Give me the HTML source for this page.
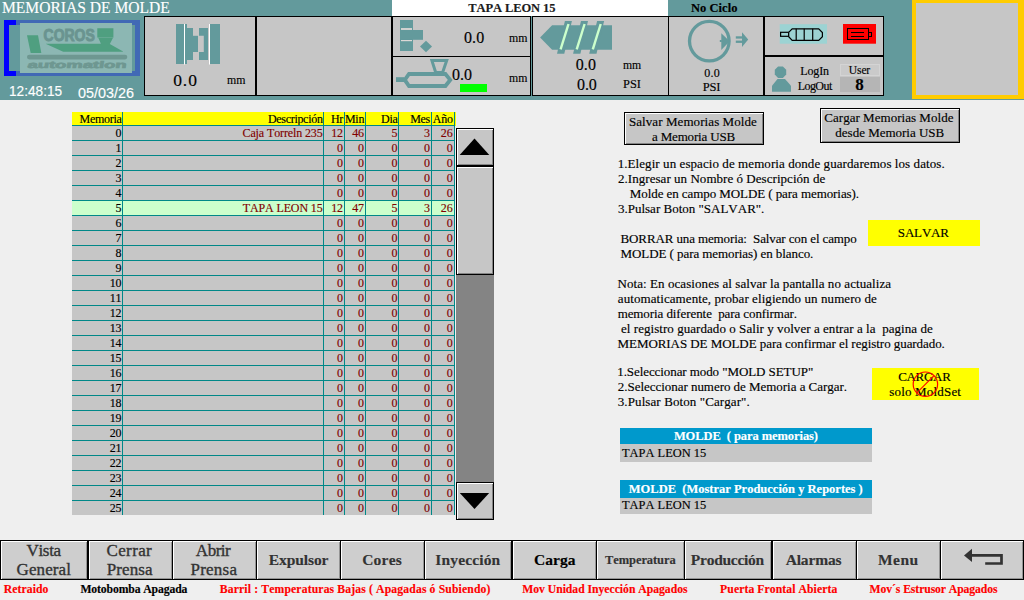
<!DOCTYPE html>
<html lang="es">
<head>
<meta charset="utf-8">
<title>MEMORIAS DE MOLDE</title>
<style>
*{box-sizing:border-box;margin:0;padding:0}
html,body{width:1024px;height:600px;overflow:hidden;background:#efefef;font-family:"Liberation Serif",serif;color:#000}
#root{position:relative;width:1024px;height:600px;overflow:hidden;background:#efefef}
.abs{position:absolute}
.t{position:absolute;white-space:pre;line-height:1}
#hdr{position:absolute;left:0;top:0;width:1024px;height:100px;background:#639a9c}
.panel{position:absolute;background:#c6c6c6;border:1px solid #000}
.teal{fill:#639a9c}
/* table */
#tbl{position:absolute;left:72px;top:112px;width:383px;height:403px;background:#c6c6c6}
.row{position:absolute;left:0;width:383px;height:15px;border-top:1px solid #088}
.row span{position:absolute;top:0;height:14px;line-height:14px;font-size:12px;text-align:right;white-space:pre;color:#800000;letter-spacing:-0.12px;font-kerning:none;-webkit-text-stroke:0.15px currentColor}
.row .c0{left:0;width:49.5px;color:#000}
.row .c1{left:51px;width:199.6px}
.row .c2{left:252px;width:19px}
.row .c3{left:273px;width:19px}
.row .c4{left:294px;width:31.5px}
.row .c5{left:327px;width:31px}
.row .c6{left:360px;width:20.6px}
.hd{width:384px!important;background:#ffff00;border-top:none!important;height:14px!important}
.hd span{color:#000!important;top:0!important;letter-spacing:-0.3px!important}
.hl{background:#ccffcc}
.vl{position:absolute;top:0;width:1px;height:403px;background:#088}
.sbb{position:absolute;left:456px;width:38px;background:#c6c6c6;border:1px solid #000;box-shadow:inset 1px 1px 0 #fff,inset -1px -1px 0 #848484}
.btn{position:absolute;background:#c6c6c6;border:1px solid #000;box-shadow:inset 1px 1px 0 #fff,inset -1px -1px 0 #848484}
.t{font-kerning:none;-webkit-text-stroke:0.15px currentColor}
/* right text */
.p{position:absolute;white-space:pre;font-size:13px;line-height:15px}
/* nav */
.nb{position:absolute;top:541px;height:38px;background:#cecece;box-shadow:inset 1px 1px 0 #fff,inset -1px -1px 0 #949494}
.st{position:absolute;top:583px;font-weight:bold;font-size:11.5px;line-height:12px;color:#f00;white-space:pre}
</style>
</head>
<body>
<div id="root">
<div id="hdr"></div>
<span class="t" style="left:1.75px;top:-1.5px;font-size:16.5px;line-height:18px;transform:scaleX(0.9431);transform-origin:0 0;color:#fff;">MEMORIAS DE MOLDE</span>
<div class="abs" style="left:392px;top:0px;width:276px;height:16px;background:#fff;"></div>
<span class="t" style="left:468.20px;top:1.0px;font-size:12.5px;line-height:14px;font-weight:bold;color:#1c1c1c;letter-spacing:-0.086px;">TAPA LEON 15</span>
<span class="t" style="left:690.96px;top:1.0px;font-size:12.5px;line-height:14px;font-weight:bold;letter-spacing:0.049px;">No Ciclo</span>
<svg class="abs" style="left:0;top:16px" width="144" height="64" viewBox="0 16 144 64">
<rect x="9" y="20" width="131" height="5" fill="#4169b5"/>
<rect x="9" y="71" width="131" height="5" fill="#4169b5"/>
<rect x="135" y="20" width="5" height="56" fill="#4169b5"/>
<rect x="4" y="20" width="5" height="56" fill="#0000ff"/>
<rect x="4" y="20" width="12" height="5" fill="#0000ff"/>
<rect x="4" y="71" width="12" height="5" fill="#0000ff"/>
<rect x="20" y="23" width="112" height="50" fill="#8cb7b3"/>
<polygon points="27,35.3 38,35.3 41.3,52.9 30.7,52.9" fill="#4f9f80"/>
<polygon points="97.3,28.2 113.4,28.2 113.4,36.8 112.7,38.5 109.8,43.9 123.1,51.4 123.1,51.7 63.2,51.7 45.6,43.7 100.9,43.7 98.6,38.5 97.3,36.8" fill="#4f9f80"/>
<rect x="97.3" y="37" width="16.1" height="0.8" fill="#6aab95"/>
<rect x="27" y="54.8" width="100.3" height="4.6" rx="2.3" fill="#6e9791"/>
<text x="43.6" y="40.5" font-family="Liberation Sans, sans-serif" font-weight="bold" font-size="16.8" textLength="51.2" lengthAdjust="spacingAndGlyphs" fill="#6a9490" stroke="#6a9490" stroke-width="1">COROS</text>
<g transform="translate(27.3 68.3) skewX(-8)"><text x="0" y="0" font-family="Liberation Sans, sans-serif" font-weight="bold" font-size="9.6" textLength="99" lengthAdjust="spacingAndGlyphs" fill="#6e9791" stroke="#6e9791" stroke-width="0.7">automation</text></g>
</svg>
<span class="t" style="left:9.46px;top:81.5px;font-size:15.5px;line-height:18px;transform:scaleX(0.8803);transform-origin:0 0;font-family:'Liberation Sans',sans-serif;color:#fff;">12:48:15</span>
<span class="t" style="left:78.14px;top:83.5px;font-size:15.5px;line-height:18px;transform:scaleX(0.9264);transform-origin:0 0;font-family:'Liberation Sans',sans-serif;color:#fff;">05/03/26</span>
<div class="panel" style="left:144px;top:16px;width:113px;height:80px"></div>
<div class="panel" style="left:256px;top:16px;width:136px;height:80px"></div>
<div class="panel" style="left:392px;top:16px;width:139px;height:41px"></div>
<div class="panel" style="left:392px;top:56px;width:139px;height:40px"></div>
<div class="panel" style="left:532px;top:16px;width:137px;height:80px"></div>
<div class="panel" style="left:668px;top:16px;width:97px;height:80px"></div>
<div class="panel" style="left:764px;top:16px;width:120px;height:40px"></div>
<div class="panel" style="left:764px;top:56px;width:120px;height:40px"></div>
<div class="abs" style="left:763px;top:16px;width:2px;height:80px;background:#000;"></div>
<div class="abs" style="left:764px;top:55px;width:120px;height:2px;background:#000;"></div>
<div class="abs" style="left:255px;top:16px;width:2px;height:80px;background:#000;"></div>
<div class="abs" style="left:912px;top:0px;width:112px;height:99px;background:#ffcc00;"></div>
<div class="abs" style="left:916px;top:3px;width:102px;height:92px;background:#c6c6c6;"></div>
<svg class="abs" style="left:170px;top:20px" width="56" height="48" viewBox="170 20 56 48">
<g class="teal"><rect x="176" y="24" width="8" height="40"/><rect x="185" y="24" width="2" height="40"/><rect x="186" y="28" width="7" height="32"/><rect x="193" y="35.8" width="5" height="16.2"/>
<path d="M199 28h9v32h-9v-8h4.8v-16.2h-4.8z"/><rect x="210" y="24" width="10" height="40"/></g>
<rect x="184" y="24" width="1" height="40.5" fill="#fff"/><rect x="209" y="24" width="1" height="40.5" fill="#fff"/></svg>
<span class="t" style="left:173.13px;top:70.0px;font-size:17.5px;line-height:20px;letter-spacing:0.979px;">0.0</span>
<span class="t" style="left:226.85px;top:71.5px;font-size:13.5px;line-height:16px;transform:scaleX(0.8777);transform-origin:0 0;">mm</span>
<svg class="abs" style="left:396px;top:18px" width="60" height="78" viewBox="396 18 60 78">
<g class="teal"><rect x="400" y="20" width="13" height="31"/><rect x="400" y="30" width="23" height="9.8"/>
<polygon points="426,40.8 432,46.5 426,52.2 420,46.5"/>
<rect x="396" y="77.2" width="8" height="4.8"/></g>
<rect x="401" y="28.1" width="11" height="1.8" fill="#dcd8d6"/><rect x="401" y="40" width="11" height="1.2" fill="#dcd8d6"/>
<polygon points="431.9,60.6 446.7,60.6 442.6,72.5 435.7,72.5" fill="none" stroke="#639a9c" stroke-width="3"/>
<polygon points="404.8,79.9 409,74 445.4,74 450.2,79.9 445.4,86 409,86" fill="none" stroke="#639a9c" stroke-width="3.8"/>
</svg>
<span class="t" style="left:463.89px;top:28.5px;font-size:16px;line-height:18px;letter-spacing:0.159px;">0.0</span>
<span class="t" style="left:508.75px;top:29.5px;font-size:13.5px;line-height:16px;transform:scaleX(0.8777);transform-origin:0 0;">mm</span>
<span class="t" style="left:451.89px;top:65.5px;font-size:16px;line-height:18px;letter-spacing:0.059px;">0.0</span>
<span class="t" style="left:508.75px;top:69.5px;font-size:13.5px;line-height:16px;transform:scaleX(0.8729);transform-origin:0 0;">mm</span>
<div class="abs" style="left:460px;top:84px;width:27px;height:8px;background:#00ff00;"></div>
<svg class="abs" style="left:536px;top:18px" width="84" height="40" viewBox="536 18 84 40">
<polygon class="teal" points="540.1,37.4 552.1,25.2 612,25.2 612,49.8 552.1,49.8"/><polygon class="teal" points="564.9,21.1 571.9,21.1 564.3,53.8 557.0,53.8"/><line x1="568.5" y1="24" x2="560.6" y2="49.4" stroke="#ccffcc" stroke-width="2.4"/><polygon class="teal" points="581.0,21.1 588.0,21.1 580.4,53.8 573.1,53.8"/><line x1="584.6" y1="24" x2="576.7" y2="49.4" stroke="#ccffcc" stroke-width="2.4"/><polygon class="teal" points="597.1,21.1 604.1,21.1 596.5,53.8 589.2,53.8"/><line x1="600.7" y1="24" x2="592.8" y2="49.4" stroke="#ccffcc" stroke-width="2.4"/></svg>
<span class="t" style="left:575.79px;top:55.5px;font-size:16px;line-height:18px;letter-spacing:0.059px;">0.0</span>
<span class="t" style="left:577.09px;top:75.5px;font-size:16px;line-height:18px;letter-spacing:-0.141px;">0.0</span>
<span class="t" style="left:622.75px;top:56.5px;font-size:13.5px;line-height:16px;transform:scaleX(0.8680);transform-origin:0 0;">mm</span>
<span class="t" style="left:622.64px;top:76.0px;font-size:13px;line-height:15px;transform:scaleX(0.9522);transform-origin:0 0;">PSI</span>
<svg class="abs" style="left:684px;top:18px" width="70" height="48" viewBox="684 18 70 48">
<circle cx="709.3" cy="41.1" r="19.8" fill="none" stroke="#639a9c" stroke-width="3.3"/>
<g class="teal"><polygon points="721.3,33.3 729.7,41.3 721.3,50"/><rect x="719.8" y="40" width="2" height="2"/>
<rect x="735.8" y="36.3" width="7" height="2.3"/><rect x="735.8" y="40.6" width="7" height="2.3"/>
<polygon points="742,32.2 748.2,39.6 742,47"/></g></svg>
<span class="t" style="left:704.24px;top:66.0px;font-size:12px;line-height:14px;letter-spacing:0.207px;">0.0</span>
<span class="t" style="left:702.64px;top:80.0px;font-size:12.5px;line-height:14px;letter-spacing:-0.133px;">PSI</span>
<svg class="abs" style="left:776px;top:22px" width="104" height="24" viewBox="776 22 104 24">
<rect x="779.7" y="24.2" width="47.3" height="19.5" fill="#9cd3d3"/>
<g fill="none" stroke="#000" stroke-width="1.2"><rect x="780.6" y="32.3" width="8" height="4"/>
<polygon points="788.7,32.3 792.2,28.8 818.7,28.8 822.4,32.5 822.4,36.7 818.7,40.4 792.2,40.4 788.7,36.7" fill="#9cd3d3"/>
<path d="M796.2 28.8v11.6M804.2 28.8v11.6M812.7 28.8v11.6"/></g>
<rect x="843" y="24" width="33" height="19.7" fill="#ff0000"/>
<g fill="none" stroke="#000" stroke-width="1" shape-rendering="crispEdges"><rect x="847.5" y="28.5" width="21" height="11"/><rect x="868.5" y="32.5" width="3" height="4"/>
<path d="M851 32.5h13M851 36.5h13"/></g></svg>
<svg class="abs" style="left:770px;top:64px" width="24" height="30" viewBox="770 64 24 30"><g class="teal">
<polygon points="778.1,66.5 782.9,66.5 786.2,69.8 786.2,74.6 782.9,77.9 778.1,77.9 774.8,74.6 774.8,69.8"/>
<polygon points="772,91.7 791,91.7 791,85.7 785,79 777.5,79 772,85.7"/></g></svg>
<span class="t" style="left:800.35px;top:64.0px;font-size:12px;line-height:14px;letter-spacing:-0.150px;">LogIn</span>
<span class="t" style="left:797.65px;top:79.0px;font-size:12px;line-height:14px;letter-spacing:-0.543px;">LogOut</span>
<div class="abs" style="left:840.3px;top:64.3px;width:39.3px;height:11.3px;background:#cacaca;border:1px solid #d4d4d4"></div>
<span class="t" style="left:848.86px;top:63.0px;font-size:11.5px;line-height:14px;letter-spacing:-0.124px;">User</span>
<div class="abs" style="left:840.3px;top:77.2px;width:39.3px;height:14.5px;background:#b5b5b5;"></div>
<span class="t" style="left:855.34px;top:75.0px;font-size:17px;line-height:19px;font-weight:bold;">8</span>
<div id="tbl">
<div class="row hd" style="top:0px"><span class="c0">Memoria</span><span class="c1">Descripción</span><span class="c2">Hr</span><span class="c3">Min</span><span class="c4">Dia</span><span class="c5">Mes</span><span class="c6">Año</span></div>
<div class="row " style="top:13px"><span class="c0">0</span><span class="c1">Caja Torreln 235</span><span class="c2">12</span><span class="c3">46</span><span class="c4">5</span><span class="c5">3</span><span class="c6">26</span></div>
<div class="row " style="top:28px"><span class="c0">1</span><span class="c1"></span><span class="c2">0</span><span class="c3">0</span><span class="c4">0</span><span class="c5">0</span><span class="c6">0</span></div>
<div class="row " style="top:43px"><span class="c0">2</span><span class="c1"></span><span class="c2">0</span><span class="c3">0</span><span class="c4">0</span><span class="c5">0</span><span class="c6">0</span></div>
<div class="row " style="top:58px"><span class="c0">3</span><span class="c1"></span><span class="c2">0</span><span class="c3">0</span><span class="c4">0</span><span class="c5">0</span><span class="c6">0</span></div>
<div class="row " style="top:73px"><span class="c0">4</span><span class="c1"></span><span class="c2">0</span><span class="c3">0</span><span class="c4">0</span><span class="c5">0</span><span class="c6">0</span></div>
<div class="row hl" style="top:88px"><span class="c0">5</span><span class="c1">TAPA LEON 15</span><span class="c2">12</span><span class="c3">47</span><span class="c4">5</span><span class="c5">3</span><span class="c6">26</span></div>
<div class="row " style="top:103px"><span class="c0">6</span><span class="c1"></span><span class="c2">0</span><span class="c3">0</span><span class="c4">0</span><span class="c5">0</span><span class="c6">0</span></div>
<div class="row " style="top:118px"><span class="c0">7</span><span class="c1"></span><span class="c2">0</span><span class="c3">0</span><span class="c4">0</span><span class="c5">0</span><span class="c6">0</span></div>
<div class="row " style="top:133px"><span class="c0">8</span><span class="c1"></span><span class="c2">0</span><span class="c3">0</span><span class="c4">0</span><span class="c5">0</span><span class="c6">0</span></div>
<div class="row " style="top:148px"><span class="c0">9</span><span class="c1"></span><span class="c2">0</span><span class="c3">0</span><span class="c4">0</span><span class="c5">0</span><span class="c6">0</span></div>
<div class="row " style="top:163px"><span class="c0">10</span><span class="c1"></span><span class="c2">0</span><span class="c3">0</span><span class="c4">0</span><span class="c5">0</span><span class="c6">0</span></div>
<div class="row " style="top:178px"><span class="c0">11</span><span class="c1"></span><span class="c2">0</span><span class="c3">0</span><span class="c4">0</span><span class="c5">0</span><span class="c6">0</span></div>
<div class="row " style="top:193px"><span class="c0">12</span><span class="c1"></span><span class="c2">0</span><span class="c3">0</span><span class="c4">0</span><span class="c5">0</span><span class="c6">0</span></div>
<div class="row " style="top:208px"><span class="c0">13</span><span class="c1"></span><span class="c2">0</span><span class="c3">0</span><span class="c4">0</span><span class="c5">0</span><span class="c6">0</span></div>
<div class="row " style="top:223px"><span class="c0">14</span><span class="c1"></span><span class="c2">0</span><span class="c3">0</span><span class="c4">0</span><span class="c5">0</span><span class="c6">0</span></div>
<div class="row " style="top:238px"><span class="c0">15</span><span class="c1"></span><span class="c2">0</span><span class="c3">0</span><span class="c4">0</span><span class="c5">0</span><span class="c6">0</span></div>
<div class="row " style="top:253px"><span class="c0">16</span><span class="c1"></span><span class="c2">0</span><span class="c3">0</span><span class="c4">0</span><span class="c5">0</span><span class="c6">0</span></div>
<div class="row " style="top:268px"><span class="c0">17</span><span class="c1"></span><span class="c2">0</span><span class="c3">0</span><span class="c4">0</span><span class="c5">0</span><span class="c6">0</span></div>
<div class="row " style="top:283px"><span class="c0">18</span><span class="c1"></span><span class="c2">0</span><span class="c3">0</span><span class="c4">0</span><span class="c5">0</span><span class="c6">0</span></div>
<div class="row " style="top:298px"><span class="c0">19</span><span class="c1"></span><span class="c2">0</span><span class="c3">0</span><span class="c4">0</span><span class="c5">0</span><span class="c6">0</span></div>
<div class="row " style="top:313px"><span class="c0">20</span><span class="c1"></span><span class="c2">0</span><span class="c3">0</span><span class="c4">0</span><span class="c5">0</span><span class="c6">0</span></div>
<div class="row " style="top:328px"><span class="c0">21</span><span class="c1"></span><span class="c2">0</span><span class="c3">0</span><span class="c4">0</span><span class="c5">0</span><span class="c6">0</span></div>
<div class="row " style="top:343px"><span class="c0">22</span><span class="c1"></span><span class="c2">0</span><span class="c3">0</span><span class="c4">0</span><span class="c5">0</span><span class="c6">0</span></div>
<div class="row " style="top:358px"><span class="c0">23</span><span class="c1"></span><span class="c2">0</span><span class="c3">0</span><span class="c4">0</span><span class="c5">0</span><span class="c6">0</span></div>
<div class="row " style="top:373px"><span class="c0">24</span><span class="c1"></span><span class="c2">0</span><span class="c3">0</span><span class="c4">0</span><span class="c5">0</span><span class="c6">0</span></div>
<div class="row " style="top:388px"><span class="c0">25</span><span class="c1"></span><span class="c2">0</span><span class="c3">0</span><span class="c4">0</span><span class="c5">0</span><span class="c6">0</span></div>
<div class="vl" style="left:50px"></div>
<div class="vl" style="left:251px"></div>
<div class="vl" style="left:272px"></div>
<div class="vl" style="left:293px"></div>
<div class="vl" style="left:326px"></div>
<div class="vl" style="left:359px"></div>
<div class="vl" style="left:382px"></div>
</div>
<div class="abs" style="left:456px;top:128px;width:38px;height:391px;background:#848484"></div>
<div class="sbb" style="top:128px;height:38px"></div>
<div class="sbb" style="top:166px;height:109px"></div>
<div class="sbb" style="top:482px;height:38px"></div>
<svg class="abs" style="left:456px;top:128px" width="38" height="392" viewBox="0 0 38 392"><polygon points="18.5,10.6 33.3,27 3.7,27"/><polygon points="3.8,365 33.2,365 18.5,381"/></svg>
<div class="btn" style="left:624px;top:112px;width:140px;height:33px"></div>
<div class="btn" style="left:820px;top:108px;width:140px;height:35px"></div>
<span class="t" style="left:628.93px;top:114.0px;font-size:13px;line-height:15px;letter-spacing:0.078px;">Salvar Memorias Molde</span>
<span class="t" style="left:652.04px;top:129.0px;font-size:13px;line-height:15px;letter-spacing:-0.177px;">a Memoria USB</span>
<span class="t" style="left:824.27px;top:110.0px;font-size:13px;line-height:15px;letter-spacing:0.033px;">Cargar Memorias Molde</span>
<span class="t" style="left:835.33px;top:125.0px;font-size:13px;line-height:15px;letter-spacing:-0.008px;">desde Memoria USB</span>
<span class="t" style="left:617.66px;top:156.0px;font-size:13px;line-height:15px;letter-spacing:0.073px;">1.Elegir un espacio de memoria donde guardaremos los datos.</span>
<span class="t" style="left:618.03px;top:171.0px;font-size:13px;line-height:15px;letter-spacing:0.040px;">2.Ingresar un Nombre ó Descripción de</span>
<span class="t" style="left:629.83px;top:186.0px;font-size:13px;line-height:15px;letter-spacing:-0.078px;">Molde en campo MOLDE ( para memorias).</span>
<span class="t" style="left:617.98px;top:201.0px;font-size:13px;line-height:15px;">3.Pulsar Boton "SALVAR".</span>
<span class="t" style="left:620.53px;top:231.0px;font-size:13px;line-height:15px;letter-spacing:-0.119px;">BORRAR una memoria:  Salvar con el campo</span>
<span class="t" style="left:620.53px;top:246.0px;font-size:13px;line-height:15px;letter-spacing:-0.066px;">MOLDE ( para memorias) en blanco.</span>
<span class="t" style="left:617.53px;top:276.0px;font-size:13px;line-height:15px;letter-spacing:0.068px;">Nota: En ocasiones al salvar la pantalla no actualiza</span>
<span class="t" style="left:617.84px;top:291.0px;font-size:13px;line-height:15px;letter-spacing:0.076px;">automaticamente, probar eligiendo un numero de</span>
<span class="t" style="left:617.63px;top:306.0px;font-size:13px;line-height:15px;letter-spacing:-0.086px;">memoria diferente  para confirmar.</span>
<span class="t" style="left:620.99px;top:321.0px;font-size:13px;line-height:15px;letter-spacing:0.051px;">el registro guardado o Salir y volver a entrar a la  pagina de</span>
<span class="t" style="left:617.53px;top:336.0px;font-size:13px;line-height:15px;letter-spacing:-0.063px;">MEMORIAS DE MOLDE para confirmar el registro guardado.</span>
<span class="t" style="left:617.26px;top:364.0px;font-size:13px;line-height:15px;letter-spacing:-0.081px;">1.Seleccionar modo "MOLD SETUP"</span>
<span class="t" style="left:617.83px;top:379.0px;font-size:13px;line-height:15px;letter-spacing:-0.038px;">2.Seleccionar numero de Memoria a Cargar.</span>
<span class="t" style="left:617.78px;top:394.0px;font-size:13px;line-height:15px;letter-spacing:0.096px;">3.Pulsar Boton "Cargar".</span>
<div class="abs" style="left:868px;top:220px;width:112px;height:26px;background:#ffff00;"></div>
<span class="t" style="left:897.83px;top:225.0px;font-size:13px;line-height:15px;letter-spacing:-0.164px;">SALVAR</span>
<div class="abs" style="left:872px;top:368px;width:107px;height:32px;background:#ffff00;"></div>
<span class="t" style="left:898.17px;top:369.0px;font-size:13px;line-height:15px;letter-spacing:-0.305px;">CARGAR</span>
<span class="t" style="left:889.27px;top:384.0px;font-size:13px;line-height:15px;letter-spacing:0.182px;">solo MoldSet</span>
<svg class="abs" style="left:910px;top:369px" width="32" height="32" viewBox="910 369 32 32"><g fill="none" stroke="#f00" stroke-width="1.2"><circle cx="925.4" cy="384.2" r="12.2"/><path d="M916.8 392.8L934 375.6"/></g></svg>
<div class="abs" style="left:620px;top:428px;width:252px;height:16px;background:#0099cc;"></div>
<div class="abs" style="left:620px;top:444px;width:252px;height:17.6px;background:#c6c6c6;"></div>
<span class="t" style="left:673.89px;top:429.0px;font-size:12.5px;line-height:14px;font-weight:bold;color:#fff;letter-spacing:-0.075px;">MOLDE  ( para memorias)</span>
<span class="t" style="left:622.48px;top:445.0px;font-size:13px;line-height:15px;transform:scaleX(0.9558);transform-origin:0 0;">TAPA LEON 15</span>
<div class="abs" style="left:620px;top:480px;width:252px;height:18px;background:#0099cc;"></div>
<div class="abs" style="left:620px;top:498px;width:252px;height:15.7px;background:#c6c6c6;"></div>
<span class="t" style="left:628.79px;top:482.0px;font-size:12.5px;line-height:14px;font-weight:bold;color:#fff;">MOLDE  (Mostrar Producción y Reportes )</span>
<span class="t" style="left:622.48px;top:497.0px;font-size:13px;line-height:15px;transform:scaleX(0.9558);transform-origin:0 0;">TAPA LEON 15</span>
<div class="abs" style="left:0px;top:540px;width:1024px;height:40px;background:#000;"></div>
<div class="nb" style="left:1px;width:86px"></div>
<div class="nb" style="left:89px;width:83px"></div>
<div class="nb" style="left:173px;width:83px"></div>
<div class="nb" style="left:257px;width:83px"></div>
<div class="nb" style="left:341px;width:83px"></div>
<div class="nb" style="left:425px;width:86px"></div>
<div class="nb" style="left:513px;width:83px"></div>
<div class="nb" style="left:597px;width:87px"></div>
<div class="nb" style="left:685px;width:86px"></div>
<div class="nb" style="left:773px;width:83px"></div>
<div class="nb" style="left:857px;width:83px"></div>
<div class="nb" style="left:941px;width:82px"></div>
<span class="t" style="left:26.51px;top:541.0px;font-size:17px;line-height:19px;color:#333;letter-spacing:-0.315px;-webkit-text-stroke:0.35px #333;">Vista</span>
<span class="t" style="left:16.60px;top:560.0px;font-size:17px;line-height:19px;color:#333;letter-spacing:0.090px;-webkit-text-stroke:0.35px #333;">General</span>
<span class="t" style="left:106.50px;top:541.0px;font-size:17px;line-height:19px;color:#333;letter-spacing:0.367px;-webkit-text-stroke:0.35px #333;">Cerrar</span>
<span class="t" style="left:106.71px;top:560.0px;font-size:17px;line-height:19px;color:#333;letter-spacing:0.120px;-webkit-text-stroke:0.35px #333;">Prensa</span>
<span class="t" style="left:195.83px;top:541.0px;font-size:17px;line-height:19px;color:#333;letter-spacing:-0.477px;-webkit-text-stroke:0.35px #333;">Abrir</span>
<span class="t" style="left:190.51px;top:560.0px;font-size:17px;line-height:19px;color:#333;letter-spacing:0.220px;-webkit-text-stroke:0.35px #333;">Prensa</span>
<span class="t" style="left:268.74px;top:550.5px;font-size:15.5px;line-height:18px;font-weight:bold;color:#333;letter-spacing:-0.086px;">Expulsor</span>
<span class="t" style="left:362.14px;top:550.5px;font-size:15.5px;line-height:18px;font-weight:bold;color:#333;letter-spacing:0.250px;">Cores</span>
<span class="t" style="left:435.28px;top:550.5px;font-size:15.5px;line-height:18px;font-weight:bold;color:#333;letter-spacing:0.155px;">Inyección</span>
<span class="t" style="left:534.04px;top:550.5px;font-size:15.5px;line-height:18px;font-weight:bold;color:#000;letter-spacing:0.017px;">Carga</span>
<span class="t" style="left:605.00px;top:553.0px;font-size:12.5px;line-height:14px;font-weight:bold;color:#333;letter-spacing:-0.082px;">Temperatura</span>
<span class="t" style="left:690.84px;top:550.5px;font-size:15.5px;line-height:18px;font-weight:bold;color:#333;letter-spacing:-0.264px;">Producción</span>
<span class="t" style="left:785.65px;top:550.5px;font-size:15.5px;line-height:18px;font-weight:bold;color:#333;letter-spacing:-0.149px;">Alarmas</span>
<span class="t" style="left:877.94px;top:550.5px;font-size:15.5px;line-height:18px;font-weight:bold;color:#333;letter-spacing:0.510px;">Menu</span>
<svg class="abs" style="left:960px;top:545px" width="50" height="26" viewBox="960 545 50 26"><path d="M971 555.4H1001.5V563.5H985.2" fill="none" stroke="#333" stroke-width="2.7"/><polygon points="964,555.4 972,548.8 972,562" fill="#333"/></svg>
<span class="t" style="left:3.80px;top:582.5px;font-size:11.7px;line-height:14px;font-weight:bold;color:#f00;letter-spacing:0.065px;">Retraido</span>
<span class="t" style="left:80.40px;top:582.5px;font-size:11.7px;line-height:14px;font-weight:bold;color:#000;letter-spacing:-0.107px;">Motobomba Apagada</span>
<span class="t" style="left:219.81px;top:582.5px;font-size:11.7px;line-height:14px;font-weight:bold;color:#f00;letter-spacing:0.136px;">Barril : Temperaturas Bajas ( Apagadas ó Subiendo)</span>
<span class="t" style="left:522.20px;top:582.5px;font-size:11.7px;line-height:14px;font-weight:bold;color:#f00;letter-spacing:-0.022px;">Mov Unidad Inyección Apagados</span>
<span class="t" style="left:720.10px;top:582.5px;font-size:11.7px;line-height:14px;font-weight:bold;color:#f00;letter-spacing:0.077px;">Puerta Frontal Abierta</span>
<span class="t" style="left:869.60px;top:582.5px;font-size:11.7px;line-height:14px;font-weight:bold;color:#f00;letter-spacing:-0.087px;">Mov´s Estrusor Apagados</span>
</div>
</body>
</html>
